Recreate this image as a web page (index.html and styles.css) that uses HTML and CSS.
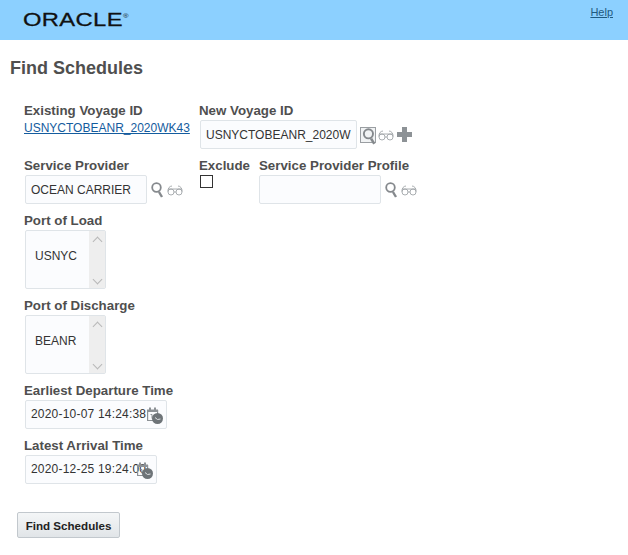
FILE: index.html
```html
<!DOCTYPE html>
<html lang="en">
<head>
    <meta charset="UTF-8">
    <title>Find Schedules</title>
    <link rel="stylesheet" href="styles.css">
</head>
<body>
    <svg class="defs" width="0" height="0">
        <symbol id="i-search" viewBox="0 0 13 16">
            <circle cx="5.500" cy="5.500" r="4.300" fill="none" stroke="#85898d" stroke-width="1.800"/>
            <path d="M8 10l3 5" stroke="#85898d" stroke-width="2.400"/>
        </symbol>
        <symbol id="i-glasses" viewBox="0 0 16 11">
            <circle cx="4" cy="7" r="3" fill="none" stroke="#a0a5a8" stroke-width="0.900"/>
            <circle cx="12" cy="7" r="3" fill="none" stroke="#a0a5a8" stroke-width="0.900"/>
            <path d="M.8 6.500C1 3 2.500 1.200 5 1M15.200 6.500C15 3 13.500 1.200 11 1M1 4h14M7 7h2" fill="none" stroke="#a0a5a8" stroke-width="0.900"/>
        </symbol>
        <symbol id="i-datetime" viewBox="0 0 16 17">
            <path d="M.6 3.500h10v10H.6z" fill="none" stroke="#8d9296" stroke-width="1.200"/>
            <path d="M0 2.500h11v2.500H0zM2 .5h2v3H2zM7 .5h2v3H7z" fill="#8d9296"/>
            <path d="M3.500 7.500h1.500v4" fill="none" stroke="#8d9296"/>
            <circle cx="10.500" cy="11.500" r="5.500" fill="#6e7478"/>
            <path d="M8 10.500l2.500 2 3-.5" fill="none" stroke="#dfe2e4"/>
        </symbol>
    </svg>

    <header class="top-bar">
        <span class="logo">ORACLE<sup class="logo-mark">&reg;</sup></span>
        <a class="help" href="#">Help</a>
    </header>

    <main class="page">
        <h1>Find Schedules</h1>

        <form class="form">
            <div class="row row-voyage">
                <div class="field field-existing">
                    <label>Existing Voyage ID</label>
                    <a class="voyage-link" href="#">USNYCTOBEANR_2020WK43</a>
                </div>
                <div class="field">
                    <label>New Voyage ID</label>
                    <div class="control">
                        <div class="text-input input-voyage">USNYCTOBEANR_2020W</div>
                        <span class="search-box"><svg class="icon-search-sm"><use href="#i-search"/></svg></span>
                        <svg class="icon-glasses icon-glasses-tight"><use href="#i-glasses"/></svg>
                        <span class="plus"></span>
                    </div>
                </div>
            </div>

            <div class="row row-provider">
                <div class="field field-provider">
                    <label>Service Provider</label>
                    <div class="control">
                        <div class="text-input input-provider">OCEAN CARRIER</div>
                        <svg class="icon-search"><use href="#i-search"/></svg>
                        <svg class="icon-glasses"><use href="#i-glasses"/></svg>
                    </div>
                </div>
                <div class="field field-exclude">
                    <label>Exclude</label>
                    <span class="checkbox"></span>
                </div>
                <div class="field">
                    <label>Service Provider Profile</label>
                    <div class="control">
                        <div class="text-input input-provider input-profile"></div>
                        <svg class="icon-search"><use href="#i-search"/></svg>
                        <svg class="icon-glasses"><use href="#i-glasses"/></svg>
                    </div>
                </div>
            </div>

            <div class="field field-list">
                <label>Port of Load</label>
                <div class="list-box">
                    <div class="list-value">USNYC</div>
                    <div class="list-scroll"><span class="chev chev-up"></span><span class="chev chev-down"></span></div>
                </div>
            </div>

            <div class="field field-list">
                <label>Port of Discharge</label>
                <div class="list-box">
                    <div class="list-value">BEANR</div>
                    <div class="list-scroll"><span class="chev chev-up"></span><span class="chev chev-down"></span></div>
                </div>
            </div>

            <div class="field field-date">
                <label>Earliest Departure Time</label>
                <div class="text-input input-date input-date-long"><span class="date-value">2020-10-07 14:24:38</span><svg class="icon-datetime"><use href="#i-datetime"/></svg></div>
            </div>

            <div class="field field-date">
                <label>Latest Arrival Time</label>
                <div class="text-input input-date input-date-short"><span class="date-value">2020-12-25 19:24:00</span><svg class="icon-datetime"><use href="#i-datetime"/></svg></div>
            </div>

            <button class="button" type="button">Find Schedules</button>
        </form>
    </main>
</body>
</html>
```

FILE: styles.css
```css
body {
    margin: 0;
    font-family: "Liberation Sans", Arial, sans-serif;
    font-size: 12px;
    color: #333;
    background: #fff;
}
.defs {
    display: block;
    height: 0;
}
.top-bar {
    height: 40px;
    background: #8cd0ff;
    display: flex;
    justify-content: space-between;
}
.logo {
    margin: 8px 0 0 23px;
    font-size: 19px;
    line-height: 24px;
    letter-spacing: 0.3px;
    color: #111;
    transform: scaleX(1.25);
    transform-origin: left;
    -webkit-text-stroke: 0.3px #111;
}
.logo-mark {
    font-size: 6px;
    vertical-align: 8px;
    line-height: 0;
    letter-spacing: 0;
    -webkit-text-stroke: 0;
}
.help {
    margin: 5px 15px 0 0;
    font-size: 11px;
    line-height: 14px;
    height: 14px;
    color: #1f5a80;
}
.page {
    padding: 18px 0 0 10px;
}
h1 {
    margin: 0;
    font-size: 18px;
    line-height: 21px;
    color: #4f4f4f;
}
.form {
    padding: 23px 0 0 14px;
}
.row {
    display: flex;
}
.field {
    display: flex;
    flex-direction: column;
}
label {
    padding-top: 2px;
    font-size: 13.3px;
    font-weight: bold;
    line-height: 14px;
    color: #4f4f4f;
}
.control {
    display: flex;
    align-items: center;
    margin-top: 2px;
}
.field-existing {
    width: 175px;
}
.voyage-link {
    margin-top: 3px;
    font-size: 12px;
    line-height: 15px;
    color: #145c9e;
}
.row-provider {
    margin-top: 8px;
}
.field-provider {
    width: 175px;
}
.field-exclude {
    width: 60px;
}
.text-input {
    box-sizing: border-box;
    height: 29px;
    padding: 0 5px;
    margin-left: 1px;
    border: 1px solid #dfe4e8;
    border-radius: 2px;
    background: #fbfcfe;
    font-size: 12px;
    line-height: 29px;
    white-space: nowrap;
}
.input-voyage {
    width: 157px;
}
.input-provider {
    width: 122px;
}
.input-profile {
    margin-left: 0;
}
.search-box {
    box-sizing: border-box;
    width: 16px;
    height: 16px;
    margin-left: 3px;
    border: 1px solid #9a9ea2;
    background: #f1f3f4;
    display: flex;
}
.icon-search-sm {
    width: 15px;
    height: 17px;
    flex: none;
    margin: 0 0 0 1px;
}
.icon-search {
    width: 13px;
    height: 16px;
    margin-left: 4px;
}
.icon-glasses {
    width: 16px;
    height: 11px;
    margin: 2px 0 0 3px;
}
.icon-glasses-tight {
    margin-left: 2px;
}
.plus {
    width: 15px;
    height: 15px;
    margin-left: 3px;
    background:
        linear-gradient(#8d9296, #8d9296) center / 15px 5px no-repeat,
        linear-gradient(#8d9296, #8d9296) center / 5px 15px no-repeat;
}
.checkbox {
    box-sizing: border-box;
    width: 13px;
    height: 13px;
    margin: 2px 0 0 1px;
    border: 1px solid #333;
    background: #fff;
}
.field-list {
    margin-top: 8px;
}
.list-box {
    box-sizing: border-box;
    width: 81px;
    height: 59px;
    margin: 2px 0 0 1px;
    border: 1px solid #dfe4e8;
    border-radius: 2px;
    background: #fbfcfe;
    display: flex;
    justify-content: space-between;
}
.list-value {
    padding: 18px 0 0 9px;
    font-size: 12px;
    line-height: 15px;
}
.list-scroll {
    box-sizing: border-box;
    width: 16px;
    background: #eeeeee;
    display: flex;
    flex-direction: column;
    justify-content: space-between;
    align-items: center;
    padding: 7px 0 5px;
}
.chev {
    width: 6px;
    height: 6px;
    border-left: 1px solid #b8b8b8;
    border-top: 1px solid #b8b8b8;
}
.chev-up {
    transform: rotate(45deg);
}
.chev-down {
    transform: rotate(225deg);
}
.field-date {
    margin-top: 8px;
}
.input-date {
    display: flex;
    align-items: center;
    margin-top: 2px;
}
.date-value {
    letter-spacing: 0.2px;
}
.input-date-long {
    width: 142px;
}
.input-date-short {
    width: 132px;
}
.icon-datetime {
    flex: none;
    width: 16px;
    height: 17px;
    margin: 2px 0 0 -9px;
}
.input-date-long .icon-datetime {
    margin-left: 1px;
}
.button {
    display: block;
    box-sizing: border-box;
    width: 103px;
    height: 26px;
    margin: 28px 0 0 -7px;
    padding: 0;
    border: 1px solid #c2c8cd;
    border-radius: 2px;
    background: linear-gradient(#f4f6f7, #e1e5e8);
    font-family: "Liberation Sans", Arial, sans-serif;
    font-size: 11.6px;
    font-weight: bold;
    color: #222;
}
```
